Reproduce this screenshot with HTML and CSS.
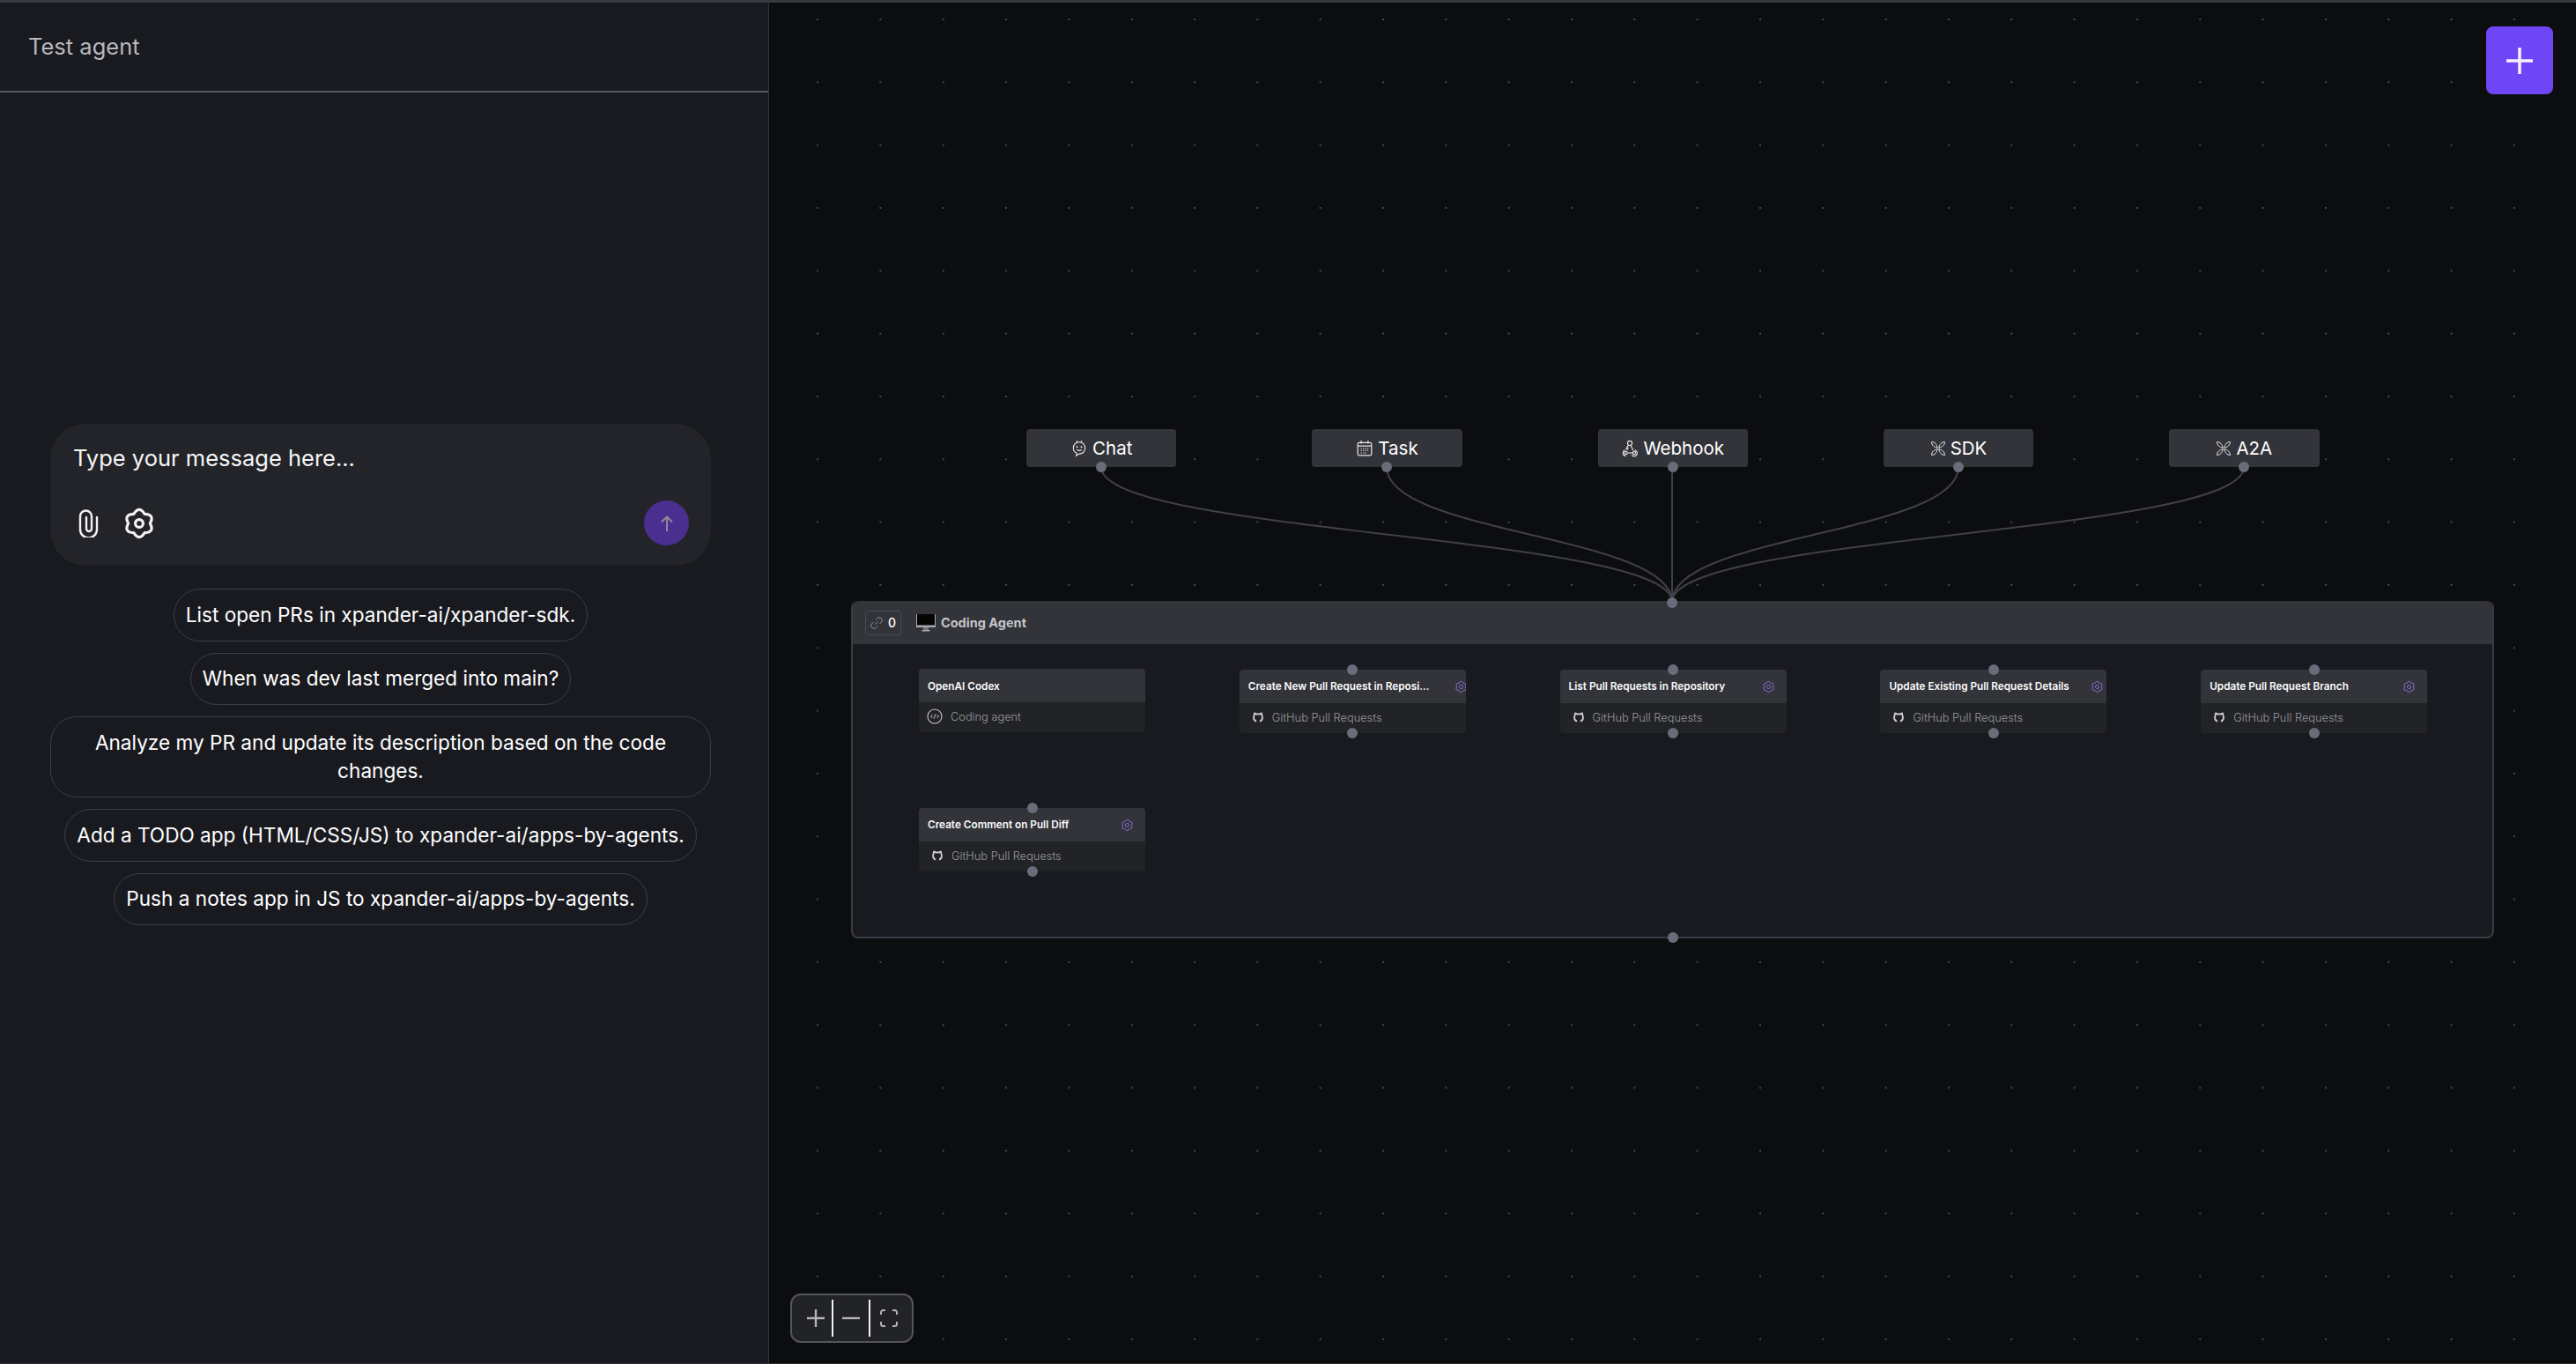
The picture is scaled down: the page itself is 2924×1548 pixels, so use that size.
FILE: index.html
```html
<!DOCTYPE html>
<html lang="en">
<head>
<meta charset="utf-8">
<title>Test agent</title>
<link rel="stylesheet" href="styles.css">
</head>
<body>
<svg class="defs" width="0" height="0" aria-hidden="true">
  <symbol id="gear" viewBox="0 0 24 24">
    <path d="M8.100 5.250Q12 -1 15.900 5.250Q23.260 5.500 19.800 12Q23.260 18.500 15.900 18.750Q12 25 8.100 18.750Q.74 18.500 4.200 12Q.74 5.500 8.100 5.250Z" fill="none" stroke="currentColor" stroke-width="2" stroke-linejoin="round"/>
    <circle cx="12" cy="12" r="2.800" fill="none" stroke="currentColor" stroke-width="2"/>
  </symbol>
  <symbol id="gear-small" viewBox="0 0 24 24">
    <path d="M8.100 5.250Q12 -1 15.900 5.250Q23.260 5.500 19.800 12Q23.260 18.500 15.900 18.750Q12 25 8.100 18.750Q.74 18.500 4.200 12Q.74 5.500 8.100 5.250Z" fill="none" stroke="currentColor" stroke-width="1.600" stroke-linejoin="round"/>
    <circle cx="12" cy="12" r="3.400" fill="none" stroke="currentColor" stroke-width="1.400"/>
  </symbol>
  <symbol id="github" viewBox="0 0 24 24">
    <path d="M8 21.500C4.500 20 2 16.500 2 12.500C2 10.500 2.800 9 3.500 8C3.200 6.500 3.300 4.500 4 3C5.800 3.200 7.500 4 8.500 5C11 4.400 13 4.400 15.500 5C16.500 4 18.200 3.200 20 3C20.700 4.500 20.800 6.500 20.500 8C21.200 9 22 10.500 22 12.500C22 16.500 19.500 20 16 21.500" fill="none" stroke="currentColor" stroke-width="3.600" stroke-linejoin="round"/>
  </symbol>
  <symbol id="petals" viewBox="0 0 24 24">
    <g fill="none" stroke="currentColor" stroke-width="1.300" stroke-linejoin="round">
      <path d="M11 11C10 6 7 2 2 2C2 7 6 10 11 11Z"/>
      <path d="M13 11C14 6 17 2 22 2C22 7 18 10 13 11Z"/>
      <path d="M11 13C10 18 7 22 2 22C2 17 6 14 11 13Z"/>
      <path d="M13 13C14 18 17 22 22 22C22 17 18 14 13 13Z"/>
    </g>
  </symbol>
</svg>
<div class="topbar"></div>
<main class="app">
  <aside class="panel">
    <header class="panel-head">Test agent</header>
    <section class="panel-body">
      <div class="composer">
        <div class="placeholder">Type your message here...</div>
        <div class="composer-tools">
          <svg class="clip" viewBox="0 0 23 32"><path d="M21 9V23a9.500 9.500 0 0 1-19 0V8a6.500 6.500 0 0 1 13 0V22a3 3 0 0 1-6 0V9" fill="none" stroke="currentColor" stroke-width="2.400" stroke-linecap="round"/></svg>
          <svg class="cog"><use href="#gear"/></svg>
          <button class="send" type="button">
            <svg viewBox="0 0 24 24" width="24" height="24"><path d="M12 21V5M6 10.500L12 4.500L18 10.500" fill="none" stroke="currentColor" stroke-width="2"/></svg>
          </button>
        </div>
      </div>
      <div class="chips">
        <div class="chip">List open PRs in xpander-ai/xpander-sdk.</div>
        <div class="chip">When was dev last merged into main?</div>
        <div class="chip">Analyze my PR and update its description based on the code changes.</div>
        <div class="chip">Add a TODO app (HTML/CSS/JS) to xpander-ai/apps-by-agents.</div>
        <div class="chip">Push a notes app in JS to xpander-ai/apps-by-agents.</div>
      </div>
    </section>
  </aside>
  <section class="canvas">
    <svg class="edges" viewBox="0 0 2051 1545" width="2051" height="1545">
      <path d="M377 527C377 603 1025 604 1025 680"/>
      <path d="M701 527C701 603 1025 604 1025 680"/>
      <path d="M1025 527L1025 680"/>
      <path d="M1350 527C1350 603 1025 604 1025 680"/>
      <path d="M1674 527C1674 603 1025 604 1025 680"/>
    </svg>

    <div class="triggers">
      <div class="trigger">
        <svg class="trigger-icon trigger-icon-lg" viewBox="0 0 18 18"><g fill="none" stroke="currentColor" stroke-width="1"><path d="M9 2.500C12.500 2.500 15 5 15 8.500C15 12 12.500 14.500 9 14.500L6 16.500L6.500 13.800C4.300 12.800 3 11 3 8.500C3 5 5.500 2.500 9 2.500Z"/><path d="M6.500 3L7 1M11.500 3L11 1M6.500 10C7.500 11.500 10.500 11.500 11.500 10"/></g><circle cx="6.800" cy="7.500" r=".9" fill="currentColor"/><circle cx="11.200" cy="7.500" r=".9" fill="currentColor"/></svg>
        <span>Chat</span>
      </div>
      <div class="trigger">
        <svg class="trigger-icon trigger-icon-lg" viewBox="0 0 18 18"><g fill="none" stroke="currentColor" stroke-width="1.100"><rect x="2" y="3" width="14" height="13" rx="1.500"/><path d="M2 6.500H16M5.500 1V4M12.500 1V4"/></g><path d="M5 9H13M5 11H13M5 13.500H11" stroke="currentColor" stroke-width="1" stroke-dasharray="1.200 1"/></svg>
        <span>Task</span>
      </div>
      <div class="trigger">
        <svg class="trigger-icon trigger-icon-lg" viewBox="0 0 18 18"><g fill="none" stroke="currentColor" stroke-width="1"><path d="M7.500 8L6 10.500"/><path d="M5 16.500A3 3 0 0 1 2 13.500C2 12 3 11 4 10.500"/><circle cx="5" cy="13.500" r="1.500"/><path d="M6.800 13.500H12.500"/><circle cx="13.500" cy="13.500" r="1.500"/><path d="M14 10.500C15.500 11 16.500 12 16.500 13.500A3 3 0 0 1 11 15.500"/><circle cx="9" cy="3.500" r="2.300"/><path d="M9.800 5.700L12.500 11M7.500 5.500L5 10"/></g></svg>
        <span>Webhook</span>
      </div>
      <div class="trigger">
        <svg class="trigger-icon"><use href="#petals"/></svg>
        <span>SDK</span>
      </div>
      <div class="trigger">
        <svg class="trigger-icon"><use href="#petals"/></svg>
        <span>A2A</span>
      </div>
    </div>

    <span class="handle handle-group-top"></span>
    <div class="group">
      <div class="group-head">
        <div class="badge">
          <svg class="link" viewBox="0 0 16 16"><path d="M6.500 9.500L9.500 6.500M7 4.500L9 2.500A3.200 3.200 0 0 1 13.500 7L11.500 9M9 11.500L7 13.500A3.200 3.200 0 0 1 2.500 9L4.500 7" fill="none" stroke="currentColor" stroke-width="1"/></svg>
          <span>0</span>
        </div>
        <svg class="monitor" viewBox="0 0 22 20">
          <rect x="0" y="0" width="22" height="15" fill="#a9a9ad"/>
          <rect x="1" y="0" width="20" height="12.500" fill="#050505"/>
          <rect x="8" y="15" width="6" height="3" fill="#77777b"/>
          <rect x="6.500" y="18" width="9" height="1.500" fill="#a9a9ad"/>
        </svg>
        <span class="group-title">Coding Agent</span>
      </div>
      <div class="group-body">
        <article class="node node-first">
          <div class="node-head"><span class="node-title">OpenAI Codex</span></div>
          <div class="node-sub node-sub-agent">
            <svg class="code-icon" viewBox="0 0 18 18"><circle cx="9" cy="9" r="8" fill="none" stroke="currentColor" stroke-width="1.100"/><path d="M6.500 7L4.500 9L6.500 11M11.500 7L13.500 9L11.500 11M9.800 6.500L8.200 11.500" fill="none" stroke="currentColor" stroke-width="1"/></svg>
            <span>Coding agent</span>
          </div>
        </article>
        <article class="node">
          <span class="handle handle-top"></span>
          <div class="node-head head-clip"><span class="node-title">Create New Pull Request in Reposi...</span><svg class="gear"><use href="#gear-small"/></svg></div>
          <div class="node-sub"><svg class="gh"><use href="#github"/></svg><span>GitHub Pull Requests</span></div>
          <span class="handle handle-bottom"></span>
        </article>
        <article class="node">
          <span class="handle handle-top"></span>
          <div class="node-head"><span class="node-title">List Pull Requests in Repository</span><svg class="gear"><use href="#gear-small"/></svg></div>
          <div class="node-sub"><svg class="gh"><use href="#github"/></svg><span>GitHub Pull Requests</span></div>
          <span class="handle handle-bottom"></span>
        </article>
        <article class="node">
          <span class="handle handle-top"></span>
          <div class="node-head head-tight"><span class="node-title">Update Existing Pull Request Details</span><svg class="gear"><use href="#gear-small"/></svg></div>
          <div class="node-sub"><svg class="gh"><use href="#github"/></svg><span>GitHub Pull Requests</span></div>
          <span class="handle handle-bottom"></span>
        </article>
        <article class="node">
          <span class="handle handle-top"></span>
          <div class="node-head"><span class="node-title">Update Pull Request Branch</span><svg class="gear"><use href="#gear-small"/></svg></div>
          <div class="node-sub"><svg class="gh"><use href="#github"/></svg><span>GitHub Pull Requests</span></div>
          <span class="handle handle-bottom"></span>
        </article>
        <article class="node">
          <span class="handle handle-top"></span>
          <div class="node-head"><span class="node-title">Create Comment on Pull Diff</span><svg class="gear"><use href="#gear-small"/></svg></div>
          <div class="node-sub"><svg class="gh"><use href="#github"/></svg><span>GitHub Pull Requests</span></div>
          <span class="handle handle-bottom"></span>
        </article>
      </div>
      <span class="handle handle-group-bottom"></span>
    </div>

    <button class="add" type="button">
      <svg viewBox="0 0 30 30" width="30" height="30"><path d="M15 0V30M0 15H30" stroke="currentColor" stroke-width="3.500" stroke-linecap="round"/></svg>
    </button>

    <div class="zoom">
      <button class="zoom-btn" type="button"><svg viewBox="0 0 20 20" width="20" height="20"><path d="M10 0V20M0 10H20" stroke="currentColor" stroke-width="2.400"/></svg></button>
      <button class="zoom-btn" type="button"><svg viewBox="0 0 20 20" width="20" height="20"><path d="M0 10H20" stroke="currentColor" stroke-width="2.400"/></svg></button>
      <button class="zoom-btn" type="button"><svg viewBox="0 0 20 20" width="20" height="20"><path d="M1 6V3.500A2.500 2.500 0 0 1 3.500 1H6M14 1H16.500A2.500 2.500 0 0 1 19 3.500V6M19 14V16.500A2.500 2.500 0 0 1 16.500 19H14M6 19H3.500A2.500 2.500 0 0 1 1 16.500V14" fill="none" stroke="currentColor" stroke-width="2"/></svg></button>
    </div>
  </section>
</main>
</body>
</html>
```

FILE: styles.css
```css
* { box-sizing: border-box; }
html, body { margin: 0; height: 100%; }
body {
  width: 2924px;
  height: 1548px;
  overflow: hidden;
  background: #0c0d0f;
  color: #fff;
  font-family: Inter, "Liberation Sans", sans-serif;
}
.defs { position: absolute; }
.topbar { height: 3px; background: #38393e; }
.app { display: flex; height: 1545px; border-bottom: 1px solid #2c2d32; }

.panel {
  width: 873px;
  flex: none;
  display: flex;
  flex-direction: column;
  background: #191a1f;
  border-right: 1px solid #34353b;
}
.panel-head {
  height: 102px;
  flex: none;
  display: flex;
  align-items: center;
  padding: 0 0 2px 32px;
  font-size: 25.500px;
  color: #b8b8bd;
  border-bottom: 2px solid #56575f;
}
.panel-body {
  padding: 376px 65px 0 57px;
  display: flex;
  flex-direction: column;
  gap: 26px;
}
.composer {
  height: 161px;
  padding: 22px 25px 23px 26px;
  display: flex;
  flex-direction: column;
  justify-content: space-between;
  background: #232429;
  border-radius: 40px;
}
.placeholder { font-size: 25.500px; line-height: 34px; color: #f6f6f7; }
.composer-tools { display: flex; align-items: center; }
.clip { width: 23px; height: 32px; margin-left: 6px; color: #f2f2f4; }
.cog { width: 38px; height: 38px; margin-left: 27px; color: #f2f2f4; }
.send {
  width: 51px;
  height: 51px;
  margin-left: auto;
  padding: 0;
  display: flex;
  align-items: center;
  justify-content: center;
  border: 0;
  border-radius: 50%;
  background: #4a2f91;
  color: #8f8a9e;
}
.chips { display: flex; flex-direction: column; align-items: center; gap: 13px; }
.chip {
  padding: 12.500px 13px;
  font-size: 22.600px;
  line-height: 32.500px;
  text-align: center;
  color: #fff;
  border: 1px solid #3c3d48;
  border-radius: 30px;
}

.canvas {
  position: relative;
  flex: 1;
  overflow: hidden;
  background-color: #0c0d0f;
  background-image: radial-gradient(circle, #46474c .8px, transparent 1px);
  background-size: 71.330px 71.330px;
  background-position: 19.400px -16.670px;
}
.edges { position: absolute; left: 0; top: 0; }
.edges path { fill: none; stroke: #404148; stroke-width: 2; }

.triggers {
  position: absolute;
  left: 292px;
  top: 484px;
  display: flex;
  gap: 153.900px;
}
.trigger {
  position: relative;
  width: 170.400px;
  height: 43px;
  display: flex;
  align-items: center;
  justify-content: center;
  gap: 5px;
  font-size: 20.500px;
  font-weight: 400;
  background: #33343a;
  border-radius: 4px;
}
.trigger::after {
  content: "";
  position: absolute;
  left: 50%;
  bottom: -6px;
  width: 12px;
  height: 12px;
  margin-left: -6px;
  border-radius: 50%;
  background: #6b6c7a;
}
.trigger-icon { width: 18px; height: 18px; color: #e8e8ea; }
.trigger-icon-lg { width: 20px; height: 20px; }

.handle {
  position: absolute;
  left: 50%;
  width: 12px;
  height: 12px;
  margin-left: -6px;
  border-radius: 50%;
  background: #6b6c7a;
  z-index: 2;
}
.handle-top { top: -6px; }
.handle-bottom { bottom: -6px; }
.handle-group-top { left: 1025px; top: 675px; z-index: 3; }
.handle-group-bottom { bottom: -7px; }

.group {
  position: absolute;
  left: 93px;
  top: 679px;
  width: 1865px;
  height: 383px;
  background: #191a1f;
  border: 2px solid #3a3b44;
  border-top: 0;
  border-radius: 8px;
}
.group-head {
  height: 49px;
  display: flex;
  align-items: center;
  padding: 0 0 0 14px;
  background: #33343a;
  border-radius: 8px 8px 0 0;
}
.badge {
  width: 41px;
  height: 28px;
  display: flex;
  align-items: center;
  gap: 5px;
  padding-left: 4px;
  font-size: 14px;
  font-weight: 500;
  border: 1px solid #4a4b52;
  border-radius: 3px;
}
.link { width: 16px; height: 16px; color: #8d8e94; }
.monitor { width: 22px; height: 20px; margin-left: 17px; }
.group-title {
  margin-left: 6px;
  font-size: 14.500px;
  font-weight: 700;
  color: #c4c4c8;
}
.group-body {
  display: grid;
  grid-template-columns: repeat(5, 257px);
  grid-auto-rows: 72px;
  column-gap: 106.800px;
  row-gap: 85px;
  padding: 29px 0 0 75px;
}
.node {
  position: relative;
  width: 257px;
  height: 72px;
  display: flex;
  flex-direction: column;
}
.node-first { margin-top: -1px; }
.node-first .node-head { padding-top: 2px; }
.node-head {
  height: 38px;
  flex: none;
  display: flex;
  align-items: center;
  justify-content: space-between;
  gap: 4px;
  padding: 0 13px 0 10px;
  overflow: hidden;
  background: #33343a;
  border-radius: 4px 4px 0 0;
}
.head-tight { padding-right: 3px; }
.head-clip { padding-right: 0; }
.head-clip .gear { margin-right: -2px; }
.node-title {
  flex: none;
  font-size: 11.750px;
  font-weight: 600;
  color: #fbfbfc;
  white-space: nowrap;
}
.gear { width: 15px; height: 15px; flex: none; color: #8a75d8; }
.node-sub {
  flex: 1;
  display: flex;
  align-items: center;
  padding: 0 0 2px 15px;
  font-size: 12.800px;
  font-weight: 300;
  color: #97989c;
  background: #222327;
  border-radius: 0 0 4px 4px;
}
.gh { width: 12px; height: 12px; margin-right: 10px; color: #cfcfd2; }
.node-sub-agent { padding-left: 9px; }
.code-icon { width: 18px; height: 18px; margin-right: 9px; color: #c8c8cb; }

.add {
  position: absolute;
  left: 1949px;
  top: 27px;
  width: 76px;
  height: 77px;
  padding: 0;
  display: flex;
  align-items: center;
  justify-content: center;
  border: 0;
  border-radius: 8px;
  background: #6f46f6;
  color: #f4f1ff;
}
.zoom {
  position: absolute;
  left: 24px;
  top: 1465px;
  width: 140px;
  height: 56px;
  display: flex;
  align-items: center;
  padding-left: 8px;
  background: #222327;
  border: 2px solid #55565d;
  border-radius: 12px;
}
.zoom-btn {
  height: 42px;
  padding: 0;
  display: flex;
  align-items: center;
  justify-content: center;
  background: none;
  border: 0;
  color: #b4b4b8;
}
.zoom-btn:nth-child(1) { width: 39px; border-right: 2px solid #f0f0f2; }
.zoom-btn:nth-child(2) { width: 42px; border-right: 2px solid #f0f0f2; }
.zoom-btn:nth-child(3) { width: 42px; }
```
